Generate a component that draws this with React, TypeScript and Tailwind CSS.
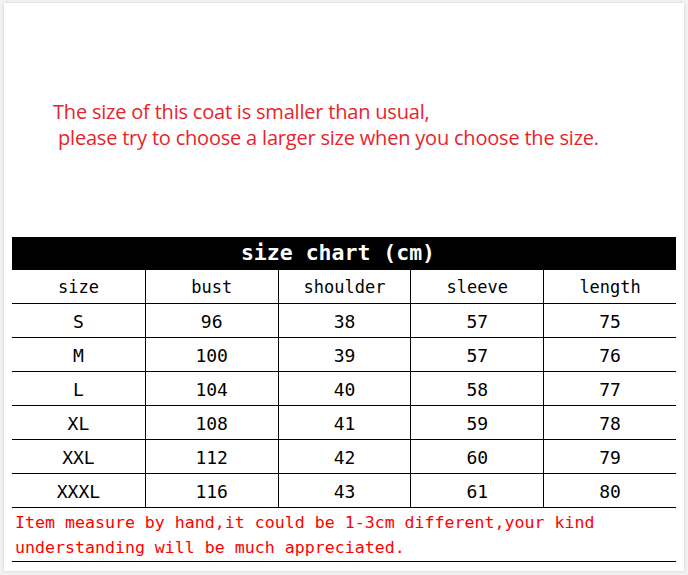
const rows = [
  ["S", "96", "38", "57", "75"],
  ["M", "100", "39", "57", "76"],
  ["L", "104", "40", "58", "77"],
  ["XL", "108", "41", "59", "78"],
  ["XXL", "112", "42", "60", "79"],
  ["XXXL", "116", "43", "61", "80"],
];

const heads = ["size", "bust", "shoulder", "sleeve", "length"];

function Row({ cells, head }: { cells: string[]; head?: boolean }) {
  return (
    <div className={`grid grid-cols-5 h-[34px] border-b border-black ${head ? "text-[17px]" : "text-[18px]"}`}>
      {cells.map((c, i) => (
        <div
          key={i}
          className={`flex items-center justify-center ${head ? "pt-[3px]" : "pt-[2px]"} ${i > 0 ? "border-l border-black" : ""}`}
        >
          {c}
        </div>
      ))}
    </div>
  );
}

export default function App() {
  return (
    <div className="w-[688px] h-[575px] bg-[#f2f2f2] pt-[3px] pl-[4px]">
      <div className="w-[680px] h-[568px] bg-white shadow-[0_0_3px_rgba(0,0,0,0.15)] flex flex-col">
        <div className="pt-[96px] pl-[49px] text-[20px] leading-[26px] text-[#e8232b] font-['Open_Sans',sans-serif] whitespace-pre tracking-[-0.2px]">
          <p>The size of this coat is smaller than usual,</p>
          <p> please try to choose a larger size when you choose the size.</p>
        </div>
        <div className="mt-[86px] ml-[8px] w-[664px] font-['DejaVu_Sans_Mono',monospace] text-black">
          <div className="h-[33px] bg-black text-white text-[21.5px] font-bold flex items-center justify-center pr-[12px]">
            size chart (cm)
          </div>
          <div>
            <Row cells={heads} head />
            {rows.map((r) => (
              <Row key={r[0]} cells={r} />
            ))}
          </div>
          <div className="h-[54px] border-b border-black pl-[3px] pt-[2px] text-[16.6px] leading-[25px] text-[#ff0000]">
            <p>Item measure by hand,it could be 1-3cm different,your kind</p>
            <p>understanding will be much appreciated.</p>
          </div>
        </div>
      </div>
    </div>
  );
}
